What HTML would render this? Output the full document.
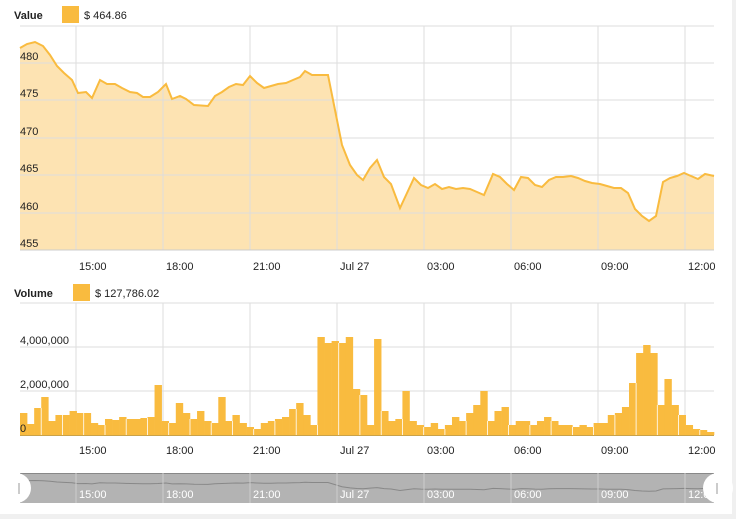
<!DOCTYPE html>
<html><head><meta charset="utf-8"><style>
body{margin:0;background:#f0f0f0;width:736px;height:519px;overflow:hidden;font-family:"Liberation Sans",sans-serif}
#p{position:absolute;left:0;top:0;width:732px;height:514px;background:#fff}
svg{position:absolute;left:0;top:0}
text{font-family:"Liberation Sans",sans-serif;font-size:11px;fill:#222}
</style></head><body><div id="p"></div>
<svg id="s" width="736" height="519"></svg>
<script>
var s=document.getElementById('s'),h='';
function L(x1,y1,x2,y2,c){h+='<line x1="'+x1+'" y1="'+y1+'" x2="'+x2+'" y2="'+y2+'" stroke="'+(c||'#ddd')+'" stroke-width="1"/>';}
function T(x,y,t,extra){h+='<text x="'+x+'" y="'+y+'" '+(extra||'')+'>'+t+'</text>';}
var gx=[76,163,250,337,424,511,598,685];
var labs=['15:00','18:00','21:00','Jul 27','03:00','06:00','09:00','12:00'];
h+='<text x="14" y="19" style="font-weight:bold">Value</text><rect x="62" y="6" width="17" height="17" fill="#f9bb3f"/>';T(84,19,'$ 464.86');
var pts=[[20,48],[27,44],[35,42],[43,46],[50,55],[57,66],[64,73],[72,80],[78,93],[86,92],[92,98],[100,80],[107,84],[115,84],[122,88],[130,92],[137,93],[143,97],[150,97],[158,92],[166,84],[172,99],[180,96],[186,99],[194,105],[208,106],[215,96],[222,92],[229,87],[236,84],[243,85],[250,76],[257,83],[264,88],[271,86],[278,84],[286,83],[293,80],[300,77],[305,71],[312,75],[320,75],[328,75],[335,110],[342,145],[350,165],[357,175],[363,180],[370,168],[377,160],[384,177],[391,184],[400,208],[407,193],[414,178],[421,185],[428,188],[435,184],[442,189],[449,187],[456,189],[463,188],[470,189],[477,192],[484,195],[493,174],[500,177],[507,184],[514,190],[521,177],[528,178],[535,185],[542,187],[549,180],[556,177],[563,177],[571,176],[578,178],[585,181],[592,183],[600,184],[607,186],[614,188],[621,188],[628,193],[635,209],[642,216],[649,221],[656,216],[663,182],[670,178],[677,176],[684,173],[691,176],[698,179],[705,174],[714,176]];
var d=pts.map(function(p){return p.join(',')}).join(' ');
h+='<polygon points="20,250 '+d+' 714,250" fill="#fde3b2"/>';
[26,63,100,138,175,213].forEach(function(y){L(20,y,714,y);});
gx.forEach(function(x){L(x,26,x,250);});
L(20,250,714,250,'#ccc');
h+='<polyline points="'+d+'" fill="none" stroke="#f9bb3f" stroke-width="2"/>';
[[480,61],[475,98],[470,136],[465,173],[460,211],[455,248]].forEach(function(a){T(20,a[1]-1,a[0]);});
gx.forEach(function(x,i){T(x+3,270,labs[i]);});
h+='<text x="14" y="297" style="font-weight:bold">Volume</text><rect x="73" y="284" width="17" height="17" fill="#f9bb3f"/>';T(95,297,'$ 127,786.02');
[303,347,391].forEach(function(y){L(20,y,714,y);});
gx.forEach(function(x){L(x,303,x,435);});
var hs=[22,11,27,38,14,20,20,24,22,22,12,10,16,15,18,16,16,17,18,50,14,12,32,22,16,24,14,12,38,14,20,12,8,6,12,14,16,18,26,32,20,10,98,92,94,92,98,46,40,10,96,24,14,16,44,14,10,8,12,6,10,18,14,22,30,44,14,24,28,10,14,14,10,14,18,14,10,10,8,10,8,12,12,20,22,28,52,82,90,82,30,56,30,20,10,6,5,3];
var w=694/hs.length;
hs.forEach(function(v,i){h+='<rect x="'+(20+i*w).toFixed(2)+'" y="'+(435-v)+'" width="'+(w+0.3).toFixed(2)+'" height="'+v+'" fill="#f9bb3f"/>';});
hs.forEach(function(v,i){if(i%3==0&&i>0){var x=(20+i*w).toFixed(1);h+='<line x1="'+x+'" y1="'+(435-Math.min(v,hs[i-1]))+'" x2="'+x+'" y2="435" stroke="#fff" stroke-width="0.8"/>';}});
L(20,435.5,714,435.5,'#c9a24a');
[['4,000,000',345],['2,000,000',389],['0',433]].forEach(function(a){T(20,a[1]-1,a[0]);});
gx.forEach(function(x,i){T(x+3,454,labs[i]);});
h+='<rect x="20" y="473" width="694" height="30" fill="#b3b3b3"/>';L(20,473.5,714,473.5,'#888');
var nd=pts.map(function(p){return p[0]+','+(478+p[1]*0.06).toFixed(1)}).join(' ');
h+='<polyline points="'+nd+'" fill="none" stroke="#888" stroke-width="1"/>';
gx.forEach(function(x){L(x,473,x,503,'#ccc');});
gx.forEach(function(x,i){h+='<text x="'+(x+3)+'" y="498" style="fill:#fff">'+labs[i]+'</text>';});
h+='<circle cx="16" cy="488" r="15" fill="#fff"/><line x1="19" y1="483" x2="19" y2="494" stroke="#999"/>';
h+='<circle cx="718" cy="488" r="15" fill="#fff"/><line x1="717" y1="483" x2="717" y2="494" stroke="#999"/>';
s.innerHTML=h;
</script></body></html>
